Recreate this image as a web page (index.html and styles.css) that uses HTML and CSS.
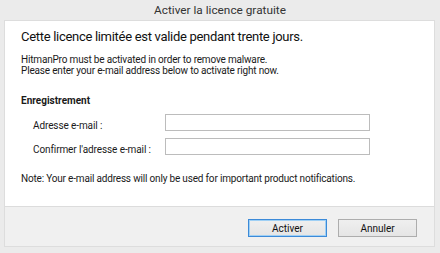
FILE: index.html
```html
<!DOCTYPE html>
<html>
<head>
<meta charset="utf-8">
<link rel="stylesheet" href="styles.css">
</head>
<body>
<div class="window">
  <div class="titlebar">Activer la licence gratuite</div>
  <div class="panel">
    <div class="content">
      <h1 class="heading">Cette licence limitée est valide pendant trente jours.</h1>
      <p class="intro">HitmanPro must be activated in order to remove malware.<br>Please enter your e-mail address below to activate right now.</p>
      <h2 class="section">Enregistrement</h2>
      <div class="form">
        <label class="label">Adresse e-mail :</label>
        <div class="input"></div>
        <label class="label">Confirmer l'adresse e-mail :</label>
        <div class="input"></div>
      </div>
      <p class="note">Note: Your e-mail address will only be used for important product notifications.</p>
    </div>
    <div class="footer">
      <button class="btn btn-primary">Activer</button>
      <button class="btn">Annuler</button>
    </div>
  </div>
</div>
</body>
</html>
```
FILE: styles.css
```css
html, body {
  margin: 0;
  padding: 0;
  background: #ebebeb;
  font-family: Roboto, "Noto Sans", sans-serif;
  color: #1a1a1a;
}
.window {
  width: 440px;
  height: 253px;
  display: flex;
  flex-direction: column;
}
.titlebar {
  height: 20px;
  line-height: 20px;
  text-align: center;
  font-size: 11.8px;
  color: #333;
}
.panel {
  margin: 0 5px 0 4px;
  border: 1px solid #dddddd;
  display: flex;
  flex-direction: column;
}
.content {
  background: #ffffff;
  height: 186px;
  padding: 6px 16px 0;
  box-sizing: border-box;
  border-bottom: 1px solid #dcdcdc;
}
.heading {
  margin: 0;
  font-size: 13px;
  letter-spacing: -0.3px;
  font-weight: normal;
  line-height: 20px;
  color: #111;
}
.intro {
  margin: 7px 0 0;
  font-size: 10px;
  letter-spacing: -0.18px;
  line-height: 11px;
}
.section {
  margin: 19px 0 0;
  font-size: 10px;
  font-weight: bold;
  line-height: 12px;
}
.form {
  display: grid;
  grid-template-columns: 144px 205px;
  grid-auto-rows: 17px;
  row-gap: 7px;
  margin-top: 7px;
}
.label {
  font-size: 10px;
  letter-spacing: -0.1px;
  line-height: 17px;
  padding-left: 12px;
  padding-top: 3px;
}
.input {
  height: 17px;
  box-sizing: border-box;
  border: 1px solid #bcbcbc;
  background: #fff;
}
.note {
  margin: 18px 0 0;
  font-size: 10px;
  letter-spacing: -0.18px;
  line-height: 12px;
}
.footer {
  height: 39px;
  background: #f0f0f0;
  display: flex;
  justify-content: flex-end;
  align-items: flex-start;
  gap: 11px;
  padding: 12px 17px 0 0;
  box-sizing: border-box;
}
.btn {
  width: 79px;
  height: 18px;
  margin: 0;
  padding: 0;
  font-family: inherit;
  font-size: 10px;
  color: #111;
  background: linear-gradient(#efefef, #e5e5e5);
  border: 1px solid #adadad;
  border-radius: 0;
}
.btn-primary {
  border-color: #3c8ad8;
  box-shadow: inset 0 0 0 1px #9fd0f5;
}
```
